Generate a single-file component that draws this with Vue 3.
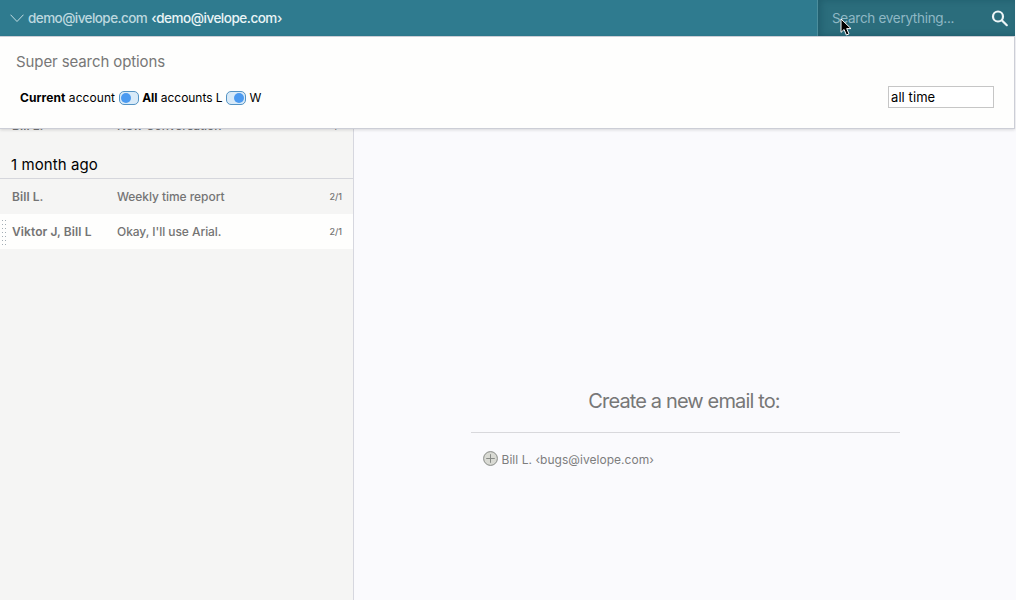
<template>
  <div class="mail-app">
    <header class="topbar">
      <div class="account">
        <svg class="chevron" viewBox="0 0 14 9" width="14" height="9">
          <path d="M0.5 0.7 L7 7.5 L13.5 0.7" />
        </svg>
        <span class="account-name">demo@ivelope.com</span>
        <span class="account-address">‹demo@ivelope.com›</span>
      </div>
      <div class="search">
        <input v-model="query" class="search-input" type="text" placeholder="Search everything..." />
        <svg class="search-icon" viewBox="0 0 18 18" width="18" height="18">
          <circle cx="7" cy="7.5" r="5" />
          <path d="M11 11.5 L15.8 16.2" />
        </svg>
      </div>
    </header>

    <div class="body">
      <section class="options">
        <h2 class="options-title">Super search options</h2>
        <div class="options-row">
          <div class="switches">
            <span class="scope-current"><b>Current</b> account</span>
            <button class="toggle" :class="{ on: allAccounts }" @click="allAccounts = !allAccounts"></button>
            <span class="scope-all"><b>All</b> accounts L</span>
            <button class="toggle" :class="{ on: wide }" @click="wide = !wide"></button>
            <span>W</span>
          </div>
          <input v-model="period" class="period" type="text" />
        </div>
      </section>

      <aside class="list">
        <div class="row previous">
          <span class="from">Bill L.</span>
          <span class="subject">New Conversation</span>
          <span class="count">1 /1</span>
        </div>
        <h3 class="group">1 month ago</h3>
        <div v-for="m in messages" :key="m.from" class="row" :class="{ active: m.active }">
          <span v-if="m.active" class="grip"></span>
          <span class="from">{{ m.from }}</span>
          <span class="subject">{{ m.subject }}</span>
          <span class="count">{{ m.count }}</span>
        </div>
      </aside>

      <main class="compose">
        <div class="compose-box">
          <h1 class="compose-title">Create a new email to:</h1>
          <div class="contact">
            <svg viewBox="0 0 15 15" width="15" height="15">
              <circle cx="7.5" cy="7.5" r="6.9" />
              <path d="M7.5 3.2 V11.8 M3.2 7.5 H11.8" />
            </svg>
            <span class="contact-name">Bill L. ‹bugs@ivelope.com›</span>
          </div>
        </div>
      </main>
    </div>

    <svg class="pointer" viewBox="0 0 13 19" width="13" height="19">
      <path d="M1 1 V14.4 L4.1 11.5 L6.4 17 L9 15.9 L6.7 10.6 H11 Z" />
    </svg>
  </div>
</template>

<script setup>
import { ref } from 'vue'

const query = ref('')
const period = ref('all time')
const allAccounts = ref(false)
const wide = ref(true)

const messages = [
  { from: 'Bill L.', subject: 'Weekly time report', count: '2/1', active: false },
  { from: 'Viktor J, Bill L', subject: "Okay, I'll use Arial.", count: '2/1', active: true },
]
</script>

<style>
body {
  margin: 0;
  overflow: hidden;
}
</style>

<style scoped>
.mail-app {
  position: relative;
  display: flex;
  flex-direction: column;
  width: 1016px;
  height: 600px;
  overflow: hidden;
  background: #fafafd;
  font-family: Inter, "Liberation Sans", sans-serif;
}

h1, h2, h3 {
  margin: 0;
  font-weight: 400;
}

/* top bar */
.topbar {
  display: flex;
  flex: none;
  justify-content: space-between;
  width: 1015px;
  height: 36px;
  background: #2f7b8f;
}

.account {
  display: flex;
  align-items: center;
  padding-left: 10px;
  font-size: 13.5px;
  font-weight: 500;
  letter-spacing: -0.57px;
}

.chevron {
  margin-right: 4px;
  fill: none;
  stroke: #c3dde3;
}

.account-name {
  color: #bcd8df;
}

.account-address {
  margin-left: 4px;
  color: #e9f4f6;
  letter-spacing: -0.48px;
}

.search {
  display: flex;
  align-items: center;
  box-sizing: border-box;
  width: 198px;
  padding: 0 6px 0 14px;
  border-left: 1px solid #4c8e9d;
  background: #2b6d7c;
  box-shadow: inset 3px 0 6px rgba(20, 75, 90, 0.45);
}

.search-input {
  flex: 1;
  min-width: 0;
  padding: 0;
  border: 0;
  outline: 0;
  background: none;
  color: #fff;
  font: 400 13.5px Inter, sans-serif;
  letter-spacing: -0.3px;
}

.search-input::placeholder {
  color: #8fb8c5;
}

.search-icon {
  fill: none;
  stroke: #edf5f7;
  stroke-width: 2.2;
  stroke-linecap: round;
}

.body {
  position: relative;
  display: flex;
  flex: 1;
  min-height: 0;
}

/* search options drop over the list */
.options {
  position: absolute;
  top: 0;
  left: 0;
  z-index: 1;
  box-sizing: border-box;
  width: 1015px;
  height: 93px;
  padding: 15px 20px 0 16px;
  border: 1px solid #ccced6;
  border-left: 0;
  background: #fefefd;
  box-shadow: 0 1px 3px rgba(0, 0, 0, 0.14);
}

.options-title {
  color: #777;
  font-size: 15px;
  line-height: 20px;
  letter-spacing: -0.1px;
}

.options-row {
  display: flex;
  align-items: center;
  justify-content: space-between;
  margin-top: 14px;
  padding-left: 4px;
}

.switches {
  display: flex;
  align-items: center;
  gap: 3.5px;
  padding-top: 1px;
  font-size: 12px;
}

.scope-current {
  letter-spacing: 0.07px;
}

.scope-all {
  letter-spacing: -0.04px;
}

.switches b {
  font-weight: 700;
}

.toggle {
  position: relative;
  box-sizing: border-box;
  width: 20px;
  height: 14px;
  padding: 0;
  border: 1px solid #5594c4;
  border-radius: 5px;
  background: #d8eaf8;
}

.toggle::before {
  content: "";
  position: absolute;
  top: 1px;
  left: 1px;
  width: 10px;
  height: 10px;
  border-radius: 50%;
  background: #4b9af0;
}

.toggle.on::before {
  left: 7px;
}

.period {
  box-sizing: border-box;
  width: 106px;
  height: 22px;
  padding: 0 2px;
  border: 1px solid #c6c6c6;
  outline: 0;
  background: #fff;
  color: #000;
  font: 400 13px Inter, sans-serif;
  letter-spacing: 0.08px;
}

/* conversation list */
.list {
  box-sizing: border-box;
  width: 354px;
  padding-top: 72px;
  border-right: 1px solid #d6d7df;
  background: #f5f5f4;
}

.group {
  height: 35px;
  padding-left: 11px;
  border-bottom: 1px solid #d5d6dc;
  color: #000;
  font-size: 15px;
  line-height: 43px;
  letter-spacing: 0.08px;
}

.row {
  position: relative;
  display: flex;
  align-items: center;
  height: 35px;
  padding: 0 11px 0 12px;
  color: #747474;
  font-size: 12px;
  font-weight: 500;
  letter-spacing: -0.06px;
}

.row.previous .count {
  word-spacing: 25px;
}

.row.active {
  background: #fefefd;
}

.from {
  width: 105px;
  font-weight: 600;
  letter-spacing: 0.08px;
}

.subject {
  flex: 1;
}

.count {
  font-size: 9px;
}

.grip {
  position: absolute;
  top: 6px;
  left: 2px;
  width: 4px;
  height: 26px;
  background-image: linear-gradient(#a3adb4 1px, transparent 1px);
  background-size: 100% 4px;
  mask-image: linear-gradient(90deg, #000 1px, transparent 1px, transparent 3px, #000 3px);
}

/* new message */
.compose {
  display: flex;
  flex: 1;
  justify-content: center;
  padding-top: 350px;
  background: #fafafd;
}

.compose-box {
  width: 429px;
}

.compose-title {
  padding-bottom: 16px;
  padding-right: 2px;
  border-bottom: 1px solid #d8d8dc;
  color: #777;
  font-size: 20px;
  line-height: 30px;
  letter-spacing: -0.86px;
  text-align: center;
}

.contact {
  display: flex;
  align-items: center;
  gap: 4px;
  padding: 17px 0 0 12px;
  color: #7d7d7d;
  font-size: 12px;
  letter-spacing: 0.04px;
}

.contact-name {
  padding-top: 2px;
}

.contact svg {
  fill: #d9dad4;
  stroke: #888b87;
}

.pointer {
  position: absolute;
  top: 18px;
  left: 840px;
  z-index: 2;
  fill: #000;
  stroke: #fff;
}
</style>
